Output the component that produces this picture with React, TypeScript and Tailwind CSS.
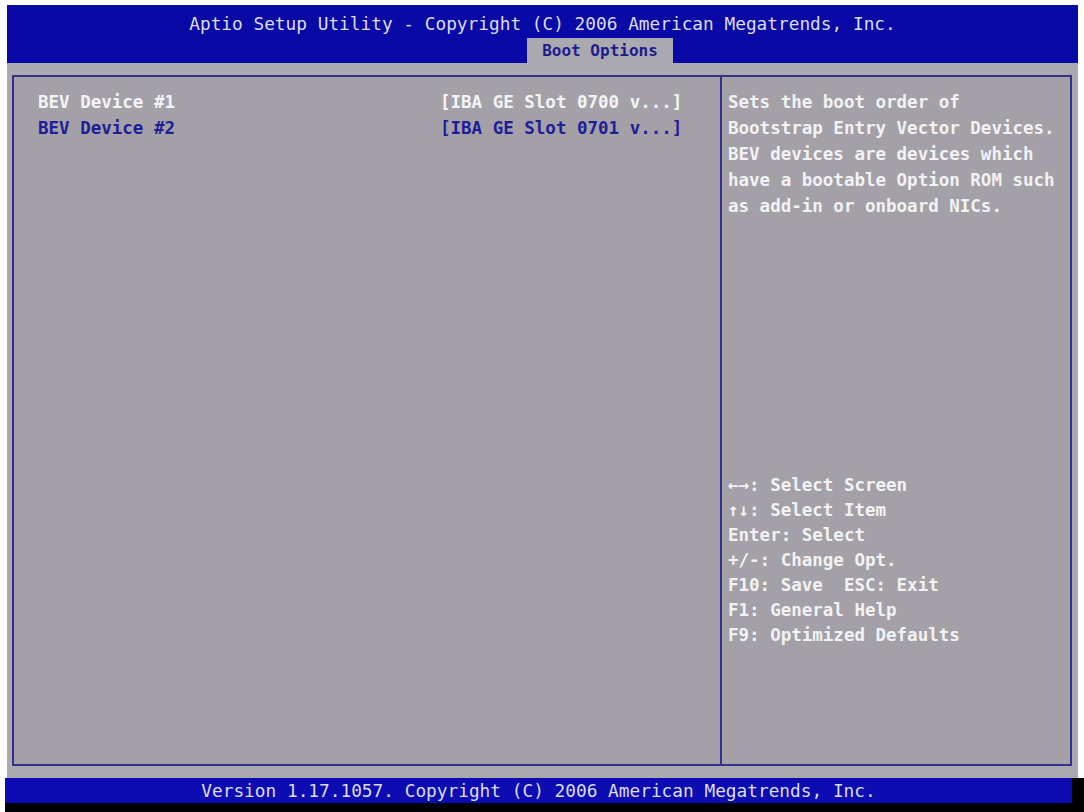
const mono = "font-['DejaVu_Sans_Mono','Liberation_Mono',monospace]";

const helpText = [
  'Sets the boot order of',
  'Bootstrap Entry Vector Devices.',
  'BEV devices are devices which',
  'have a bootable Option ROM such',
  'as add-in or onboard NICs.',
];

const keys = [
  '←→: Select Screen',
  '↑↓: Select Item',
  'Enter: Select',
  '+/-: Change Opt.',
  'F10: Save  ESC: Exit',
  'F1: General Help',
  'F9: Optimized Defaults',
];

const devices = [
  { label: 'BEV Device #1', value: '[IBA GE Slot 0700 v...]', active: true },
  { label: 'BEV Device #2', value: '[IBA GE Slot 0701 v...]', active: false },
];

export default function App() {
  return (
    <div className={`w-[1084px] h-[812px] bg-white pt-[5px] pl-[7px] flex flex-col overflow-hidden ${mono}`}>
      {/* Header */}
      <div className="h-[58px] mr-[6px] bg-[#0909a6] flex flex-col shrink-0">
        <div className="mt-[6px] h-[26px] leading-[26px] text-center text-[17.8px] text-[#dcdcee] whitespace-pre">
          Aptio Setup Utility - Copyright (C) 2006 American Megatrends, Inc.
        </div>
        <div className="mt-[1px] flex">
          <div className="ml-[520px] w-[146px] h-[25px] leading-[25px] bg-[#aaa9b0] text-center text-[16px] font-bold text-[#1c1c8e]">
            Boot Options
          </div>
        </div>
      </div>

      {/* Body */}
      <div className="flex-1 mr-[6px] bg-[#aaa9b0] pl-[5px] pr-[6px] pt-[12px] pb-[12px] flex">
        <div className="flex-1 flex border-2 border-[#32328e] bg-[#a3a1a7]">
          {/* Left panel */}
          <div className="w-[708px] border-r-2 border-[#32328e] pl-[24px] pt-[12px] text-[17.5px] font-bold">
            {devices.map(d => (
              <div key={d.label} className={`flex h-[26px] leading-[26px] ${d.active ? 'text-[#f4f4f6]' : 'text-[#1e1e98]'}`}>
                <span className="w-[402px]">{d.label}</span>
                <span>{d.value}</span>
              </div>
            ))}
          </div>

          {/* Right panel */}
          <div className="flex-1 flex flex-col pl-[6px] pt-[12px] pb-[116px] text-[17.5px] font-bold text-[#f2f2f4]">
            <div>
              {helpText.map(l => (
                <div key={l} className="h-[26px] leading-[26px] whitespace-pre">{l}</div>
              ))}
            </div>
            <div className="flex-1" />
            <div>
              {keys.map(k => (
                <div key={k} className="h-[25px] leading-[25px] whitespace-pre">{k}</div>
              ))}
            </div>
          </div>
        </div>
      </div>

      {/* Footer */}
      <div className="h-[34px] -ml-[2px] bg-black shrink-0">
        <div className="h-[25px] mr-[12px] bg-[#0c0cb2] text-center leading-[25px] text-[17.8px] text-[#dcdcee] whitespace-pre">
          Version 1.17.1057. Copyright (C) 2006 American Megatrends, Inc.
        </div>
      </div>
    </div>
  );
}
